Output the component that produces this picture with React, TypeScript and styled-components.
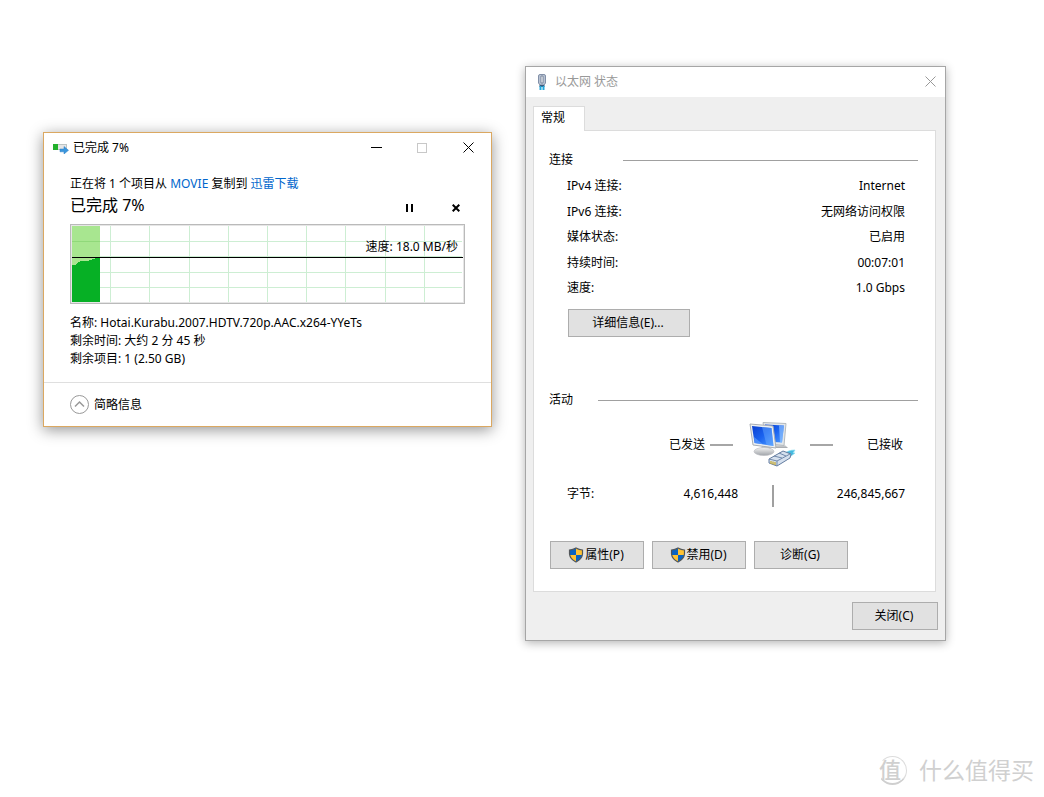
import React from "react";
import styled, { createGlobalStyle } from "styled-components";

const GlobalStyle = createGlobalStyle`
  *, *::before, *::after { box-sizing: border-box; }
  body {
    margin: 0;
    background: #fff;
    color: #000;
    font: 12px/18px "Noto Sans", "Noto Sans CJK SC", sans-serif;
  }
  h1, h2, p, dl, dd { margin: 0; font-size: 12px; font-weight: 400; }
  svg { display: block; flex: none; }
`;

const Desktop = styled.main`
  position: relative;
  min-height: 100vh;
  overflow: hidden;
`;

const Window = styled.section<{ $x: number; $y: number; $w: number; $active?: boolean }>`
  position: absolute;
  left: ${(p) => p.$x}px;
  top: ${(p) => p.$y}px;
  width: ${(p) => p.$w}px;
  border: 1px solid ${(p) => (p.$active ? "#dba861" : "#a6a6a6")};
  background: ${(p) => (p.$active ? "#fff" : "#efefef")};
  box-shadow: ${(p) =>
    p.$active ? "0 3px 14px rgba(0, 0, 0, 0.42)" : "0 2px 9px rgba(0, 0, 0, 0.3)"};
`;

const TitleBar = styled.header<{ $dim?: boolean }>`
  display: flex;
  align-items: center;
  height: 30px;
  background: #fff;
  padding-left: 9px;
  color: ${(p) => (p.$dim ? "#999" : "#000")};
`;

const Title = styled.h1`
  flex: 1;
  margin-left: 4px;
`;

const CaptionButton = styled.button<{ $narrow?: boolean }>`
  display: grid;
  place-items: center;
  width: ${(p) => (p.$narrow ? 30 : 46)}px;
  height: 30px;
  padding: 0 0 1px;
  border: 0;
  background: transparent;
  color: inherit;
`;

const CopyBody = styled.div`
  padding: 12px 26px 14px;
`;

const Link = styled.a`
  color: #0066cc;
  text-decoration: none;
`;

const ProgressRow = styled.div`
  display: flex;
  align-items: flex-end;
  height: 24px;
`;

const ProgressTitle = styled.h2`
  flex: 1;
  font-size: 16px;
  line-height: 24px;
`;

const IconButton = styled.button`
  display: grid;
  place-items: center;
  width: 18px;
  height: 18px;
  margin-left: 28px;
  padding: 0;
  border: 0;
  background: transparent;
`;

const Chart = styled.div`
  position: relative;
  margin-top: 7px;
  border: 1px solid #bababa;
  height: 80px;

  > svg {
    width: 100%;
    height: 100%;
    border: 1px solid #e6e6e6;
  }
`;

const Speed = styled.p`
  position: absolute;
  right: 6px;
  top: 13px;
`;

const Details = styled.div`
  margin-top: 10px;
`;

const CopyFooter = styled.footer`
  border-top: 1px solid #dfdfdf;
  padding: 12px 26px;
`;

const Toggle = styled.button`
  display: flex;
  align-items: center;
  gap: 5px;
  padding: 0;
  border: 0;
  background: transparent;
  color: #000;
  font: inherit;
`;

const StatusBody = styled.div`
  padding: 9px 9px 0 7px;
`;

const Tab = styled.button`
  display: block;
  position: relative;
  width: 52px;
  height: 25px;
  margin-bottom: -1px;
  padding: 0 7px 2px;
  border: 1px solid #dcdcdc;
  border-bottom: 0;
  background: #fff;
  color: #000;
  font: inherit;
  line-height: 20px;
  text-align: left;
`;

const Panel = styled.div`
  border: 1px solid #dcdcdc;
  background: #fff;
  padding: 20px 17px 22px 15px;
`;

const GroupTitle = styled.h2<{ $gap: number }>`
  display: flex;
  align-items: center;
  gap: ${(p) => p.$gap}px;

  &::after {
    content: "";
    flex: 1;
    height: 1px;
    background: #a0a0a0;
  }
`;

const Facts = styled.dl`
  display: flex;
  flex-direction: column;
  justify-content: space-between;
  height: 120px;
  margin: 8px 13px 12px 18px;
`;

const Fact = styled.div`
  display: flex;
  justify-content: space-between;
`;

const PushButton = styled.button<{ $w: number }>`
  display: flex;
  align-items: center;
  justify-content: center;
  gap: 1px;
  width: ${(p) => p.$w}px;
  height: 28px;
  padding: 0 2px 0 0;
  border: 1px solid #adadad;
  background: #e1e1e1;
  color: #000;
  font: inherit;
`;

const Connection = styled.div`
  padding: 0 0 54px 19px;
`;

const Traffic = styled.div`
  display: flex;
  align-items: center;
  margin: 12px 15px 0 120px;
  height: 48px;
`;

const Dash = styled.span`
  width: 23px;
  height: 2px;
  background: #a6a6a6;
`;

const Sent = styled.span`
  margin-right: 5px;
`;

const Received = styled.span`
  margin-left: auto;
`;

const Bytes = styled.dl`
  display: grid;
  grid-template-columns: 60px 111px 70px 1fr;
  align-items: start;
  margin: 16px 13px 34px 18px;
  height: 22px;
  text-align: right;

  dt { text-align: left; }
`;

const Divider = styled.span`
  justify-self: center;
  width: 2px;
  height: 22px;
  background: #a0a0a0;
`;

const Actions = styled.div`
  display: flex;
  gap: 8px;
  padding-left: 1px;
`;

const StatusFooter = styled.footer`
  display: flex;
  justify-content: flex-end;
  padding: 10px 7px;
`;

const Watermark = styled.div`
  position: absolute;
  right: 10px;
  bottom: 10px;
  display: flex;
  align-items: center;
  gap: 12px;
  color: #d0d0d0;
  font-size: 23px;
  line-height: 34px;
`;

const Seal = styled.span`
  display: grid;
  place-items: start;
  width: 29px;
  height: 29px;
  border: 1px solid #dcdcdc;
  border-bottom: 2px solid #cfcfcf;
  border-left-color: transparent;
  border-radius: 50%;
  font-size: 22px;
  font-weight: 500;
  line-height: 24px;
`;

const CopyIcon = () => (
  <svg width="16" height="12" viewBox="0 0 16 12" aria-hidden="true">
    <rect x="0.5" y="2.5" width="13" height="5" fill="#e6e6e6" stroke="#bcc4c4" />
    <rect x="0" y="2" width="5" height="6" fill="#22b02c" />
    <path d="M7 7h4V4.500L15.500 8.300 11 12V9.800H7z" fill="#3a96dd" stroke="#2a7fc6" strokeWidth="0.5" />
  </svg>
);

const CrossIcon = () => (
  <svg width="11" height="11" viewBox="0 0 11 11" stroke="currentColor" aria-hidden="true">
    <path d="M0.500 0.500l10 10M10.500 0.500L0.500 10.500" />
  </svg>
);

const PlugIcon = () => (
  <svg width="16" height="18" viewBox="0 0 16 18" aria-hidden="true">
    <path d="M3.500 3q0-1.500 1.500-1.500h4q1.500 0 1.500 1.500v7L9 12H5l-1.500-2z" fill="#b9c3d3" stroke="#8290a8" />
    <path d="M6 3h2v7H6z" fill="#fff" stroke="#66748e" strokeWidth="0.8" />
    <path d="M4.500 12h5v2h-5z" fill="#3b5d80" />
    <path d="M5.500 13v4M8.500 13v4" stroke="#24a8dc" strokeWidth="2" />
  </svg>
);

const ShieldIcon = () => (
  <svg width="16" height="16" viewBox="0 0 16 16" aria-hidden="true">
    <path d="M8 1Q5 2.800 1.500 3v4Q2 12 8 15z" fill="#0a63c2" />
    <path d="M8 1q3 1.800 6.500 2v4Q14 12 8 15z" fill="#ffc233" />
    <path d="M1.600 8H8v7Q2.500 12 1.600 8z" fill="#ffc233" />
    <path d="M14.400 8H8v7q5.500-3 6.400-7z" fill="#0a63c2" />
    <path d="M8 1Q5 2.800 1.500 3v4Q2 12 8 15q6-3 6.500-8V3Q11 2.800 8 1z" fill="none" stroke="#52565a" strokeWidth="1.200" />
  </svg>
);

const ComputersIcon = () => (
  <svg width="48" height="48" viewBox="0 0 48 48" aria-hidden="true">
    <defs>
      <linearGradient id="screen" x1="0" y1="0" x2="1" y2="1">
        <stop offset="0" stopColor="#0a3fd0" />
        <stop offset="0.500" stopColor="#1a63f0" />
        <stop offset="1" stopColor="#4f9cff" />
      </linearGradient>
      <linearGradient id="base" x1="0" y1="0" x2="0" y2="1">
        <stop offset="0" stopColor="#f4f4f4" />
        <stop offset="1" stopColor="#a0a4a9" />
      </linearGradient>
    </defs>
    <path d="M27 23h8l4 4H26z" fill="url(#base)" />
    <path d="M14 1.500l23 1-2 22-18-2z" fill="#e3e7ea" stroke="#b4babf" />
    <path d="M16 3.500l19 1-2 17-16-1z" fill="url(#screen)" />
    <path d="M30 4.500l5 0-2 17h-2z" fill="#9dccff" opacity="0.600" />
    <path d="M13 25h8l1 5H11z" fill="#b9bdc2" />
    <ellipse cx="15" cy="30.500" rx="10" ry="4" fill="url(#base)" stroke="#b8bbbf" strokeWidth="0.600" />
    <path d="M1 3l23 2 3 22-23-3z" fill="#edf0f2" stroke="#a9aeb4" />
    <path d="M3 5l19.500 2 2 18-19-3z" fill="url(#screen)" />
    <path d="M13 6l9.500 1 2 18-7-1z" fill="#6fb0ff" opacity="0.450" />
    <path d="M5 16l9 7.300-8.500-1.300z" fill="#6aa9ff" opacity="0.600" />
    <path d="M34 34q4-5 12-5l-2 3 2 0q-4 4-9 5z" fill="#43b9df" stroke="#8bdcf0" strokeWidth="0.700" />
    <path d="M20 38l14-8 8 3-1 4-13 8-8-3z" fill="#d5e0ee" stroke="#647da0" />
    <path d="M20 38l8 2v5M28 40l13-7M25 35l8 2M30 32l7 3" fill="none" stroke="#7189ab" />
    <path d="M22 40v3M24 40.500v3M26 41v3" stroke="#c9ad38" strokeWidth="1.300" />
  </svg>
);

const SpeedChart = () => (
  <svg role="img" aria-label="传输速度">
    <rect width="28" height="76" fill="#a8e690" />
    <path
      d="M0 39h4v-1h1v-1h1v-1h2v-1h9v-1h3v-1h3v-1h5v44H0z"
      fill="#06b025"
      shapeRendering="crispEdges"
    />
    <rect y="15" width="28" height="1" fill="#90d97a" />
    {[38, 77, 117, 156, 195, 234, 273, 313, 352].map((x) => (
      <rect key={x} x={x} width="1" height="76" fill="#cdeed3" />
    ))}
    <svg x="28">
      {[15, 30, 46, 61].map((y) => (
        <rect key={y} y={y} width="362" height="1" fill="#cdeed3" />
      ))}
    </svg>
    <rect y="31" width="100%" height="1" fill="#000" />
  </svg>
);

const facts = [
  ["IPv4 连接:", "Internet"],
  ["IPv6 连接:", "无网络访问权限"],
  ["媒体状态:", "已启用"],
  ["持续时间:", "00:07:01"],
  ["速度:", "1.0 Gbps"],
];

const CopyWindow = () => (
  <Window $x={43} $y={132} $w={449} $active>
    <TitleBar>
      <CopyIcon />
      <Title>已完成 7%</Title>
      <CaptionButton aria-label="最小化">
        <svg width="11" height="11" aria-hidden="true">
          <rect y="5" width="11" height="1" />
        </svg>
      </CaptionButton>
      <CaptionButton aria-label="最大化" disabled>
        <svg width="10" height="10" aria-hidden="true">
          <rect x="0.500" y="0.500" width="9" height="9" fill="none" stroke="#c8c8c8" />
        </svg>
      </CaptionButton>
      <CaptionButton aria-label="关闭">
        <CrossIcon />
      </CaptionButton>
    </TitleBar>
    <CopyBody>
      <p>
        正在将 1 个项目从 <Link href="#movie">MOVIE</Link> 复制到{" "}
        <Link href="#downloads">迅雷下载</Link>
      </p>
      <ProgressRow>
        <ProgressTitle>已完成 7%</ProgressTitle>
        <IconButton aria-label="暂停">
          <svg width="8" height="8" aria-hidden="true">
            <path d="M0 0h2v8H0zM5 0h2v8H5z" />
          </svg>
        </IconButton>
        <IconButton aria-label="取消">
          <svg width="8" height="8" stroke="#000" strokeWidth="2" aria-hidden="true">
            <path d="M0.700 0.700l6.600 6.600M7.300 0.700L0.700 7.300" />
          </svg>
        </IconButton>
      </ProgressRow>
      <Chart>
        <SpeedChart />
        <Speed>速度: 18.0 MB/秒</Speed>
      </Chart>
      <Details>
        <p>名称: Hotai.Kurabu.2007.HDTV.720p.AAC.x264-YYeTs</p>
        <p>剩余时间: 大约 2 分 45 秒</p>
        <p>剩余项目: 1 (2.50 GB)</p>
      </Details>
    </CopyBody>
    <CopyFooter>
      <Toggle aria-expanded="true">
        <svg width="19" height="19" fill="none" stroke="#999" aria-hidden="true">
          <circle cx="9.500" cy="9.500" r="9" />
          <path d="M5 11.500l4.500-4.500 4.500 4.500" strokeWidth="1.500" />
        </svg>
        简略信息
      </Toggle>
    </CopyFooter>
  </Window>
);

const StatusWindow = () => (
  <Window $x={525} $y={66} $w={421}>
    <TitleBar $dim>
      <PlugIcon />
      <Title>以太网 状态</Title>
      <CaptionButton $narrow aria-label="关闭">
        <CrossIcon />
      </CaptionButton>
    </TitleBar>
    <StatusBody>
      <Tab role="tab" aria-selected="true">常规</Tab>
      <Panel role="tabpanel">
        <GroupTitle $gap={50}>连接</GroupTitle>
        <Facts>
          {facts.map(([name, value]) => (
            <Fact key={name}>
              <dt>{name}</dt>
              <dd>{value}</dd>
            </Fact>
          ))}
        </Facts>
        <Connection>
          <PushButton $w={122}>详细信息(E)...</PushButton>
        </Connection>
        <GroupTitle $gap={25}>活动</GroupTitle>
        <Traffic>
          <Sent>已发送</Sent>
          <Dash />
          <svg width="77" height="48" viewBox="-16 0 77 48" aria-hidden="true">
            <ComputersIcon />
          </svg>
          <Dash />
          <Received>已接收</Received>
        </Traffic>
        <Bytes>
          <dt>字节:</dt>
          <dd>4,616,448</dd>
          <Divider />
          <dd>246,845,667</dd>
        </Bytes>
        <Actions>
          <PushButton $w={94}><ShieldIcon />属性(P)</PushButton>
          <PushButton $w={94}><ShieldIcon />禁用(D)</PushButton>
          <PushButton $w={94}>诊断(G)</PushButton>
        </Actions>
      </Panel>
    </StatusBody>
    <StatusFooter>
      <PushButton $w={86}>关闭(C)</PushButton>
    </StatusFooter>
  </Window>
);

export default function App() {
  return (
    <>
      <GlobalStyle />
      <Desktop>
        <CopyWindow />
        <StatusWindow />
        <Watermark>
          <Seal>值</Seal>
          <span>什么值得买</span>
        </Watermark>
      </Desktop>
    </>
  );
}
